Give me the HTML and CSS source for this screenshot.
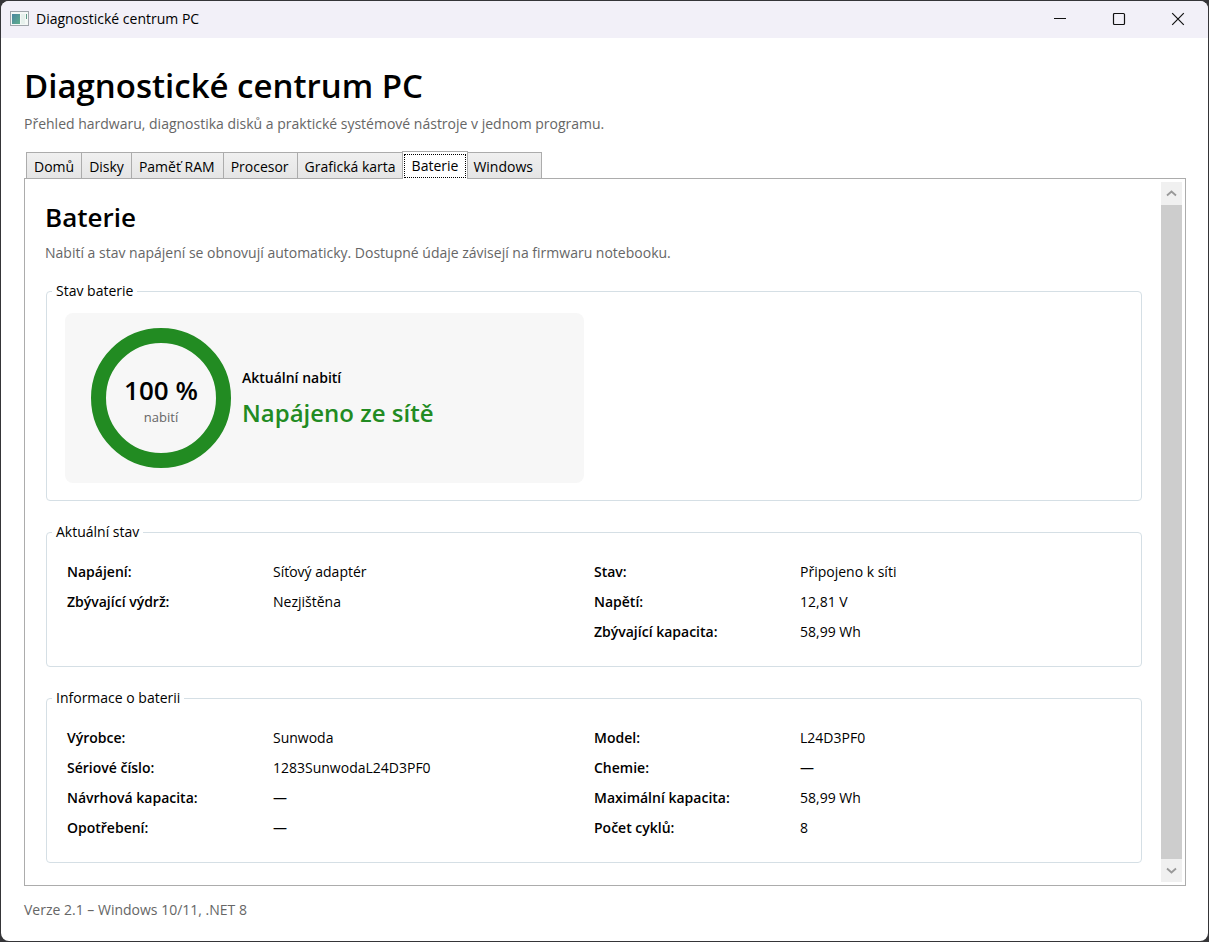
FILE: index.html
```html
<!DOCTYPE html>
<html lang="cs">
<head>
<meta charset="utf-8">
<meta name="viewport" content="width=device-width, initial-scale=1">
<title>Diagnostické centrum PC</title>
<link rel="stylesheet" href="styles.css">
</head>
<body>
<div class="window">
  <header class="titlebar">
    <svg class="app-icon" width="20" height="16" viewBox="0 0 20 16" aria-hidden="true">
      <defs><linearGradient id="pane" x1="0" y1="0" x2="1" y2="1"><stop offset="0" stop-color="#4a86a0"/><stop offset="1" stop-color="#5fae8c"/></linearGradient></defs>
      <rect x="0.5" y="0.5" width="18" height="14" fill="#f4f8f6" stroke="#9fa5ab"/>
      <rect x="2" y="3" width="8" height="10" fill="url(#pane)"/>
      <rect x="11" y="3" width="4" height="10" fill="#e6f0ec"/>
      <rect x="16" y="3" width="1" height="5" fill="#5c9a86"/>
    </svg>
    <span class="app-name">Diagnostické centrum PC</span>
    <div class="window-buttons">
      <button type="button" class="window-button" aria-label="Minimalizovat"><svg width="14" height="14" viewBox="0 0 14 14"><path d="M1 6.5h12" stroke="#111" fill="none"/></svg></button>
      <button type="button" class="window-button" aria-label="Maximalizovat"><svg width="14" height="14" viewBox="0 0 14 14"><rect x="1.5" y="1.5" width="11" height="11" rx="1" stroke="#111" stroke-width="1.2" fill="none"/></svg></button>
      <button type="button" class="window-button" aria-label="Zavřít"><svg width="14" height="14" viewBox="0 0 14 14"><path d="M1.2 1.2l11.6 11.6M12.8 1.2L1.2 12.8" stroke="#111" stroke-width="1.2" fill="none"/></svg></button>
    </div>
  </header>

  <main class="content">
    <h1 class="page-title">Diagnostické centrum PC</h1>
    <p class="muted page-lead">Přehled hardwaru, diagnostika disků a praktické systémové nástroje v jednom programu.</p>

    <div class="tabs" role="tablist">
      <button type="button" class="tab" role="tab">Domů</button>
      <button type="button" class="tab" role="tab">Disky</button>
      <button type="button" class="tab" role="tab">Paměť RAM</button>
      <button type="button" class="tab" role="tab">Procesor</button>
      <button type="button" class="tab" role="tab">Grafická karta</button>
      <button type="button" class="tab tab-active" role="tab" aria-selected="true"><span class="tab-focus">Baterie</span></button>
      <button type="button" class="tab" role="tab">Windows</button>
    </div>

    <section class="panel" role="tabpanel">
      <div class="panel-body">
        <h2 class="section-title">Baterie</h2>
        <p class="muted section-lead">Nabití a stav napájení se obnovují automaticky. Dostupné údaje závisejí na firmwaru notebooku.</p>

        <fieldset class="group">
          <legend>Stav baterie</legend>
          <div class="cards">
            <div class="card">
              <div class="gauge">
                <div class="ring">
                  <strong class="ring-value">100 %</strong>
                  <span class="ring-label">nabití</span>
                </div>
              </div>
              <div class="charge">
                <div class="charge-label">Aktuální nabití</div>
                <div class="charge-state">Napájeno ze sítě</div>
              </div>
            </div>
          </div>
        </fieldset>

        <fieldset class="group">
          <legend>Aktuální stav</legend>
          <div class="details">
            <dl class="list">
              <dt>Napájení:</dt><dd>Síťový adaptér</dd>
              <dt>Zbývající výdrž:</dt><dd>Nezjištěna</dd>
            </dl>
            <dl class="list">
              <dt>Stav:</dt><dd>Připojeno k síti</dd>
              <dt>Napětí:</dt><dd>12,81 V</dd>
              <dt>Zbývající kapacita:</dt><dd>58,99 Wh</dd>
            </dl>
          </div>
        </fieldset>

        <fieldset class="group">
          <legend>Informace o baterii</legend>
          <div class="details">
            <dl class="list">
              <dt>Výrobce:</dt><dd>Sunwoda</dd>
              <dt>Sériové číslo:</dt><dd>1283SunwodaL24D3PF0</dd>
              <dt>Návrhová kapacita:</dt><dd>—</dd>
              <dt>Opotřebení:</dt><dd>—</dd>
            </dl>
            <dl class="list">
              <dt>Model:</dt><dd>L24D3PF0</dd>
              <dt>Chemie:</dt><dd>—</dd>
              <dt>Maximální kapacita:</dt><dd>58,99 Wh</dd>
              <dt>Počet cyklů:</dt><dd>8</dd>
            </dl>
          </div>
        </fieldset>
      </div>
      <div class="scrollbar">
        <button type="button" class="scroll-button" aria-label="Nahoru"><svg width="11" height="7" viewBox="0 0 11 7"><path d="M1 5.5L5.5 1.5L10 5.5" fill="none" stroke="#999" stroke-width="1.8"/></svg></button>
        <div class="scroll-thumb"></div>
        <button type="button" class="scroll-button" aria-label="Dolů"><svg width="11" height="7" viewBox="0 0 11 7"><path d="M1 1.5L5.5 5.5L10 1.5" fill="none" stroke="#999" stroke-width="1.8"/></svg></button>
      </div>
    </section>

    <footer class="footer">Verze 2.1 – Windows 10/11, .NET 8</footer>
  </main>
</div>
</body>
</html>
```
FILE: styles.css
```css
* {
  box-sizing: border-box;
}

body {
  margin: 0;
  padding: 1px;
  min-height: 100vh;
  display: flex;
  background: #353538;
  color: #000;
  font: 14px/20px "Open Sans", "Noto Sans", sans-serif;
}

h1, h2, p, dl, dd {
  margin: 0;
}

button {
  font: inherit;
  color: inherit;
}

.window {
  flex: 1;
  display: flex;
  flex-direction: column;
  background: #fff;
  border-radius: 8px;
  overflow: hidden;
}

.titlebar {
  display: flex;
  align-items: center;
  height: 37px;
  padding: 0 1px 1px 9px;
  background: #f2f0f8;
}

.app-icon {
  margin-right: 6px;
}

.app-name {
  font-size: 14px;
}

.window-buttons {
  display: flex;
  align-self: stretch;
  margin-left: auto;
}

.window-button {
  display: flex;
  align-items: center;
  justify-content: center;
  width: 59px;
  padding: 0;
  border: 0;
  background: none;
}

.content {
  flex: 1;
  display: flex;
  flex-direction: column;
  padding: 24px 22px 21px 23px;
}

.page-title {
  font-size: 33px;
  line-height: 48px;
  font-weight: 600;
}

.muted {
  color: #666;
}

.page-lead {
  margin: 4px 0 18px;
}

.tabs {
  display: flex;
  align-items: flex-end;
  height: 26px;
  padding-left: 2px;
}

.tab {
  height: 26px;
  margin-right: -1px;
  padding: 2px 7px 0;
  border: 1px solid #acacac;
  border-bottom: 0;
  background: linear-gradient(#f0f0f0, #e5e5e5);
  white-space: nowrap;
}

.tab:nth-child(n+3) {
  padding-right: 8px;
}

.tab.tab-active {
  z-index: 1;
  height: 28px;
  margin: 0 -3px -1px -2px;
  padding: 1px;
  background: #fff;
}

.tab-focus {
  display: block;
  padding: 1px 7px;
  border: 1px dotted #000;
}

.panel {
  flex: 1;
  display: flex;
  padding: 3px;
  border: 1px solid #acacac;
}

.panel-body {
  flex: 1;
  padding: 17px 19px 18px 17px;
}

.section-title {
  font-size: 26px;
  line-height: 36px;
  font-weight: 600;
}

.section-lead {
  margin: 8px 0 18px;
}

.group {
  min-width: 0;
  margin: 0 0 21px 1px;
  padding: 12px 18px 17px;
  border: 1px solid #d5dfe5;
  border-radius: 4px;
}

.group:last-child {
  margin-bottom: 0;
}

.group legend {
  margin-left: -13px;
  padding: 0 4px;
}

.cards {
  display: grid;
  grid-template-columns: 1fr 1fr;
  gap: 20px;
}

.card {
  display: flex;
  align-items: center;
  padding: 15px;
  border-radius: 8px;
  background: #f7f7f7;
}

.gauge {
  padding: 0 11px;
}

.ring {
  display: flex;
  flex-direction: column;
  align-items: center;
  justify-content: center;
  width: 140px;
  height: 140px;
  padding-top: 3px;
  border: 15px solid #228b22;
  border-radius: 50%;
}

.ring-value {
  font-size: 26px;
  line-height: 34px;
  font-weight: 600;
}

.ring-label {
  font-size: 13px;
  color: #666;
}

.charge {
  padding-top: 2px;
}

.charge-label {
  font-weight: 600;
}

.charge-state {
  margin-top: 8px;
  font-size: 24px;
  line-height: 34px;
  font-weight: 600;
  color: #228b22;
}

.details {
  display: grid;
  grid-template-columns: 1fr 1fr;
  padding: 3px 2px 2px;
}

.list {
  display: grid;
  grid-template-columns: 206px 1fr;
  grid-auto-rows: 30px;
  line-height: 30px;
}

.list dt {
  font-weight: 600;
}

.scrollbar {
  display: flex;
  flex-direction: column;
  width: 21px;
}

.scroll-button {
  display: flex;
  align-items: center;
  justify-content: center;
  height: 23px;
  padding: 0;
  border: 0;
  background: #f0f0f0;
}

.scroll-thumb {
  flex: 1;
  background: #cdcdcd;
}

.footer {
  margin-top: 14px;
  color: #666;
}
```
